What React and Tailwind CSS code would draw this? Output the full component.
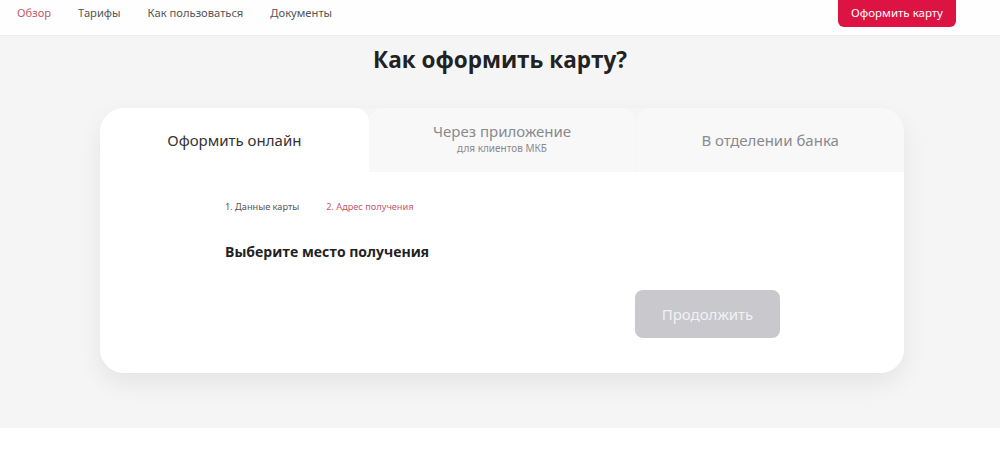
import React from "react";

export default function App() {
  const font = { fontFamily: '"Noto Sans", "Open Sans", sans-serif' };
  return (
    <div className="w-[1000px] h-[459px] bg-white overflow-hidden" style={font}>
      <header className="h-[36px] bg-[#fefefe] border-b border-[#ececee] flex items-start justify-between pl-[17px] pr-[44px]">
        <nav className="flex items-center h-[26px] gap-[27px] text-[11.2px] text-[#555]">
          <span className="text-[#c7586b]">Обзор</span>
          <span>Тарифы</span>
          <span>Как пользоваться</span>
          <span>Документы</span>
        </nav>
        <button className="mt-[-8px] h-[35px] w-[118px] pt-[7px] bg-[#dc1343] text-white text-[11.5px] rounded-[6px] flex items-center justify-center">
          Оформить карту
        </button>
      </header>
      <main className="bg-[#f5f5f5] h-[392px] flex flex-col">
        <h1 className="text-center text-[22.5px] font-bold text-[#222] mt-[6px] leading-[36px]" style={{ fontFamily: '"Open Sans", sans-serif' }}>
          Как оформить карту?
        </h1>
        <div className="ml-[100px] mt-[30px] w-[804px] rounded-[24px] shadow-[0_10px_24px_rgba(0,0,0,0.07)] flex flex-col">
          <div className="flex h-[64px]">
            <div className="w-[269px] bg-white rounded-tl-[24px] rounded-tr-[14px] flex items-center justify-center text-[15px] text-[#333]">
              Оформить онлайн
            </div>
            <div className="w-[267px] bg-[#f8f8f9] rounded-t-[14px] flex flex-col items-center justify-center text-[#8a8a8e]">
              <span className="text-[15px] leading-[20px] mt-[-4px]">Через приложение</span>
              <span className="text-[10px] leading-[14px]">для клиентов МКБ</span>
            </div>
            <div className="w-[268px] ml-[1px] bg-[#f8f8f9] rounded-tl-[14px] rounded-tr-[24px] flex items-center justify-center text-[15px] text-[#8a8a8e]">
              В отделении банка
            </div>
          </div>
          <div className="bg-white h-[201px] rounded-b-[24px] flex flex-col pl-[125px] pr-[124px]">
            <div className="flex gap-[27px] text-[9.2px] mt-[28px] leading-[14px]">
              <span className="text-[#555]">1. Данные карты</span>
              <span className="text-[#c7586b]">2. Адрес получения</span>
            </div>
            <div className="mt-[28px] text-[14px] font-bold text-[#222] leading-[20px]" style={{ fontFamily: '"Open Sans", sans-serif' }}>
              Выберите место получения
            </div>
            <div className="flex justify-end mt-[28px]">
              <button className="w-[145px] h-[48px] bg-[#c8c8cd] rounded-[8px] text-[15px] text-[#f2f2f4]">
                Продолжить
              </button>
            </div>
          </div>
        </div>
      </main>
    </div>
  );
}
